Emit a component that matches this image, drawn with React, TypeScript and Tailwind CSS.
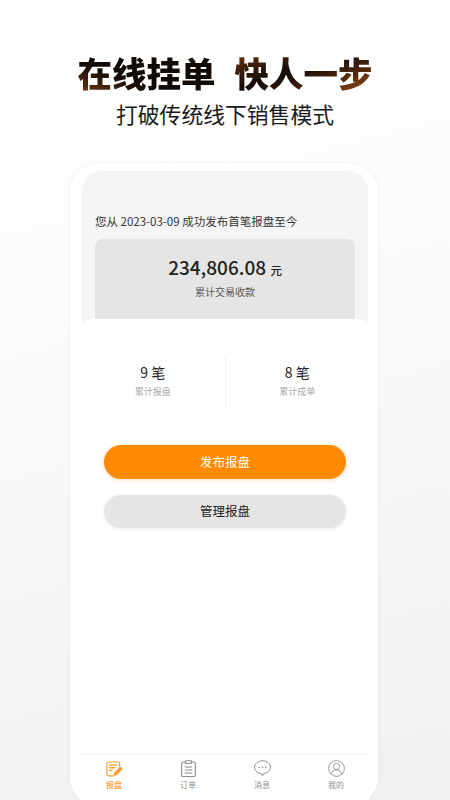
import type { ReactNode } from 'react'

const cjk = { fontFamily: '"Noto Sans CJK SC", "Noto Sans", sans-serif' }

function ReportIcon() {
  return (
    <svg width="16" height="16" viewBox="0 0 17 17" fill="none" stroke="#ff9a2e" strokeWidth="1.2" strokeLinecap="round" strokeLinejoin="round">
      <path d="M14.500 6V2.600A1.600 1.600 0 0 0 12.900 1H2.600A1.600 1.600 0 0 0 1 2.600v11.600a1.600 1.600 0 0 0 1.600 1.600h5.200" />
      <path d="M3.800 4.400h7.400M3.800 7.200h5.400M3.800 10h2.600" strokeWidth="1.500" />
      <path d="M8.800 15l.5-2.400 5.200-5.200a1.200 1.200 0 0 1 1.800 1.800l-5.200 5.200z" fill="#ff9a2e" />
    </svg>
  )
}

function OrderIcon() {
  return (
    <svg width="15" height="17" viewBox="0 0 15 17" fill="none" stroke="#8c8c8c" strokeWidth="1.100" strokeLinejoin="round">
      <path d="M4.500 2H2A1.300 1.300 0 0 0 .7 3.300v11.900A1.300 1.300 0 0 0 2 16.500h11a1.300 1.300 0 0 0 1.300-1.300V3.300A1.300 1.300 0 0 0 13 2h-2.500" />
      <rect x="4.500" y="0.700" width="6" height="2.800" rx="0.600" />
      <path d="M3.800 7h7.400M3.800 10h7.400M3.800 13h7.400" />
    </svg>
  )
}

function MessageIcon() {
  return (
    <svg width="17" height="17" viewBox="0 0 17 17" fill="none" stroke="#8c8c8c" strokeWidth="1">
      <path d="M8.500.7C4.100.7.600 3.600.600 7.200c0 3.500 3.300 6.300 7 6.500l.9 2.200 1-2.300c3.600-.4 6.900-3 6.900-6.400C16.400 3.600 12.900.7 8.500.7z" strokeLinejoin="round" />
      <circle cx="5.200" cy="7.200" r="0.800" fill="#8c8c8c" stroke="none" />
      <circle cx="8.500" cy="7.200" r="0.800" fill="#8c8c8c" stroke="none" />
      <circle cx="11.800" cy="7.200" r="0.800" fill="#8c8c8c" stroke="none" />
    </svg>
  )
}

function MineIcon() {
  return (
    <svg width="17" height="17" viewBox="0 0 17 17" fill="none" stroke="#8c8c8c" strokeWidth="0.900">
      <circle cx="8.500" cy="8.500" r="7.900" />
      <circle cx="8.500" cy="6.500" r="3.100" />
      <path d="M2.900 14c.7-2.500 3-3.900 5.600-3.900s4.900 1.400 5.600 3.900" />
    </svg>
  )
}

function Tab({ icon, label, active }: { icon: ReactNode; label: string; active?: boolean }) {
  return (
    <div className="flex w-[74px] shrink-0 flex-col items-center">
      <div className="flex h-[17px] items-center">{icon}</div>
      <span className={`mt-[2px] text-[8px] leading-[12px] ${active ? 'font-medium text-[#ff9a2e]' : 'text-[#8f8f8f]'}`}>{label}</span>
    </div>
  )
}

function Stat({ value, label }: { value: string; label: string }) {
  return (
    <div className="flex flex-1 flex-col items-center pb-[5px]">
      <span className="text-[14px] leading-[20px] text-[#222]">{value}</span>
      <span className="mt-[3px] text-[9px] leading-[13px] text-[#a8a8a8]">{label}</span>
    </div>
  )
}

export default function App() {
  return (
    <div
      className="flex h-[800px] w-[450px] flex-col items-center overflow-hidden bg-[linear-gradient(165deg,#ffffff_12%,#f0f0f0_100%)]"
      style={cjk}
    >
      <h1 className="mt-[47px] flex gap-[19px] text-[34.500px] font-black leading-[50px]">
        <span className="bg-gradient-to-tr from-[#8a430f] via-[#120a05] via-[35%] to-[#120a05] bg-clip-text text-transparent">在线挂单</span>
        <span className="bg-gradient-to-br from-[#7a3c10] via-[#120a05] via-[45%] to-[#a8520f] bg-clip-text text-transparent">快人一步</span>
      </h1>
      <p className="mt-[1px] text-[21.800px] leading-[32px] text-[#1a1a1a]">打破传统线下销售模式</p>

      <div className="mr-[2px] mt-[33px] flex h-[644px] w-[308px] shrink-0 flex-col rounded-[30px] bg-white pl-[12px] pr-[10px] pt-[8px] shadow-[0_0_4px_rgba(0,0,0,0.06)]">
        <div className="h-[160px] shrink-0 overflow-hidden rounded-t-[20px] bg-[#f5f5f5] px-[13px] pt-[41px]">
          <p className="text-[11.500px] leading-[18px] text-[#333]">您从 2023-03-09 成功发布首笔报盘至今</p>
          <div className="mt-[9px] h-[120px] rounded-[8px] bg-[#e5e5e5] pt-[15px] text-center">
            <p className="text-[19px] font-medium leading-[26px] text-[#222]">
              234,806.08 <span className="text-[11.500px]">元</span>
            </p>
            <p className="mt-[1px] text-[10px] leading-[15px] text-[#555]">累计交易收款</p>
          </div>
        </div>

        <div className="relative -mx-[1px] -mt-[12px] flex min-h-0 flex-1 flex-col rounded-t-[12px] bg-white">
          <div className="mt-[38px] flex h-[51px] items-center">
            <Stat value="9 笔" label="累计报盘" />
            <div className="h-full w-px bg-[#f0f0f0]" />
            <Stat value="8 笔" label="累计成单" />
          </div>

          <div className="mt-[37px] flex flex-col gap-[16px] px-[23px]">
            <button className="h-[34px] rounded-full bg-[#ff8a00] text-[12.500px] text-white shadow-[0_1px_4px_rgba(255,138,0,0.3)]">发布报盘</button>
            <button className="h-[33px] rounded-full bg-[#e5e5e5] text-[12.500px] text-[#222] shadow-[0_1px_4px_rgba(0,0,0,0.08)]">管理报盘</button>
          </div>

          <div className="-mx-[2px] mt-[226px] flex justify-center border-t border-[#f2f2f2] pt-[5px]">
            <Tab icon={<ReportIcon />} label="报盘" active />
            <Tab icon={<OrderIcon />} label="订单" />
            <Tab icon={<MessageIcon />} label="消息" />
            <Tab icon={<MineIcon />} label="我的" />
          </div>
        </div>
      </div>
    </div>
  )
}
